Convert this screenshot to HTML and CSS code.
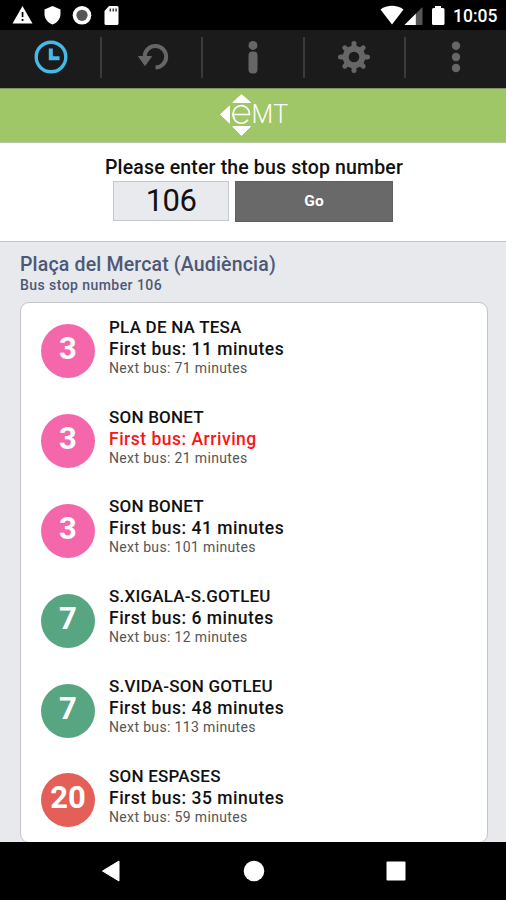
FILE: index.html
```html
<!DOCTYPE html>
<html lang="en">
<head>
<meta charset="utf-8">
<title>EMT bus times</title>
<link rel="stylesheet" href="styles.css">
</head>
<body>
<div class="status">
  <svg class="status-left" width="130" height="30" viewBox="0 0 130 30" fill="#fff">
    <path d="M22.500 6 32.500 23.500H12.500Z"/><path d="M21.700 12h1.700v5h-1.700zM21.700 19h1.700v2h-1.700z" fill="#000"/>
    <path d="M52.500 6 60.500 9.500V14c0 5-3.500 9-8 10.500C48 23 44.500 19 44.500 14V9.500Z"/>
    <circle cx="82" cy="15.300" r="9.300"/><circle cx="82" cy="15.300" r="5.600" fill="#555"/>
    <path d="M109 6h8q1.500 0 1.500 1.500v16q0 1.500-1.500 1.500h-11q-1.500 0-1.500-1.500V11Z"/><path d="M109.500 8.500h1.600v3h-1.600zM112.500 8.500h1.600v3h-1.600zM115.300 8.500h1.600v3h-1.600z" fill="#444"/>
  </svg>
  <div class="status-right">
    <svg width="72" height="30" viewBox="380 0 72 30" fill="#fff">
      <path d="M380.500 9.500C387 4.500 397 4.500 403.500 9.500L392 24.500Z"/>
      <path d="M422.500 7V25H404.500Z" fill="#555"/><path d="M415.800 13.700V25H404.500Z"/>
      <path d="M435 6h6v2h2q1.500 0 1.500 1.500v14q0 1.500-1.500 1.500h-9.500q-1.500 0-1.500-1.500v-14q0-1.500 1.500-1.500h1.500z"/>
    </svg>
    <span class="clock">10:05</span>
  </div>
</div>
<nav class="tabs">
  <div class="tab"><svg width="36" height="36" viewBox="0 0 36 36" fill="none" stroke="#45b9e8"><circle cx="18" cy="18" r="14.800" stroke-width="3.400"/><path d="M17.800 9.500V19.300H26.500" stroke-width="4"/></svg></div>
  <div class="tab"><svg width="36" height="36" viewBox="0 0 36 36" fill="none" stroke="#666"><path d="M10.600 17A10.800 10.800 0 1 1 21.500 28.600" stroke-width="4"/><path d="M4.500 17.500H17.500L11 26.500Z" fill="#666" stroke-width="1"/></svg></div>
  <div class="tab"><svg width="36" height="36" viewBox="0 0 36 36" fill="#666"><circle cx="18" cy="6.400" r="4.500"/><rect x="13.500" y="12.500" width="9" height="22" rx="4"/></svg></div>
  <div class="tab"><svg width="36" height="36" viewBox="0 0 36 36"><g stroke="#666" stroke-width="5" stroke-linecap="round"><path d="M18 4.500V31.500M4.500 18H31.500M8.800 8.800 27.200 27.200M27.200 8.800 8.800 27.200"/></g><circle cx="18" cy="18" r="8.300" fill="#1b1b1b" stroke="#666" stroke-width="6"/></svg></div>
  <div class="tab"><svg width="36" height="36" viewBox="0 0 36 36" fill="#666"><circle cx="19" cy="6.800" r="4.200"/><circle cx="19" cy="18" r="4.200"/><circle cx="19" cy="29" r="4.200"/></svg></div>
</nav>
<header class="brand">
  <svg width="70" height="44" viewBox="219 93 70 44" fill="#fff" stroke="#fff" stroke-linejoin="round">
    <path d="M241.500 94.500 250.500 102.500H232.800ZM241.500 135.500 250.500 126.500H232.800ZM220.500 114.500 229.500 106V123Z" stroke-width="1"/>
    <path d="M233.400 114.500H249.500A8.200 8.800 0 1 0 247.800 119.800" fill="none" stroke-width="1.700"/>
    <text class="logo" x="251.500" y="123.200">MT</text>
  </svg>
</header>
<section class="search">
  <div class="prompt">Please enter the bus stop number</div>
  <div class="controls"><div class="field">106</div><div class="go">Go</div></div>
</section>
<main class="results">
  <div class="stop">Plaça del Mercat (Audiència)</div>
  <div class="stop-no">Bus stop number 106</div>
  <div class="card">
    <div class="row"><div class="line pink">3</div><div><div class="dest">PLA DE NA TESA</div><div class="first">First bus: 11 minutes</div><div class="next">Next bus: 71 minutes</div></div></div>
    <div class="row"><div class="line pink">3</div><div><div class="dest">SON BONET</div><div class="first now">First bus: Arriving</div><div class="next">Next bus: 21 minutes</div></div></div>
    <div class="row"><div class="line pink">3</div><div><div class="dest">SON BONET</div><div class="first">First bus: 41 minutes</div><div class="next">Next bus: 101 minutes</div></div></div>
    <div class="row"><div class="line green">7</div><div><div class="dest">S.XIGALA-S.GOTLEU</div><div class="first">First bus: 6 minutes</div><div class="next">Next bus: 12 minutes</div></div></div>
    <div class="row"><div class="line green">7</div><div><div class="dest">S.VIDA-SON GOTLEU</div><div class="first">First bus: 48 minutes</div><div class="next">Next bus: 113 minutes</div></div></div>
    <div class="row"><div class="line red">20</div><div><div class="dest">SON ESPASES</div><div class="first">First bus: 35 minutes</div><div class="next">Next bus: 59 minutes</div></div></div>
  </div>
</main>
<footer class="navbar">
  <svg width="20" height="24" viewBox="0 0 20 24"><path d="M1.500 12 18 2V22Z" fill="#fff" stroke="#fff" stroke-linejoin="round"/></svg>
  <svg width="22" height="24" viewBox="0 0 22 24"><circle cx="11" cy="12" r="10.300" fill="#fff"/></svg>
  <svg width="20" height="24" viewBox="0 0 20 24"><rect x="0.500" y="2.500" width="19" height="19" rx="1" fill="#fff"/></svg>
</footer>
</body>
</html>
```
FILE: styles.css
```css
* { box-sizing: border-box; }
body {
  margin: 0;
  width: 506px;
  height: 900px;
  overflow: hidden;
  display: flex;
  flex-direction: column;
  background: #000;
  font-family: Roboto, "Liberation Sans", sans-serif;
  font-weight: 500;
  color: #111;
  white-space: nowrap;
}
svg { display: block; flex: none; }
.status { height: 30px; flex: none; display: flex; justify-content: space-between; }
.status-right { display: flex; width: 126px; }
.clock { color: #fff; font-size: 17.500px; line-height: 32px; margin-left: 1px; }
.tabs { height: 58px; flex: none; display: flex; background: #1b1b1b; }
.tab { flex: 1; display: flex; align-items: center; justify-content: center; position: relative; padding-bottom: 4px; }
.tab + .tab::before {
  content: "";
  position: absolute;
  left: -1px;
  top: 7px;
  width: 2px;
  height: 41px;
  background: #3b3b3b;
}
.brand {
  height: 55px;
  flex: none;
  display: flex;
  justify-content: center;
  padding: 5px 0 0 2px;
  background: #9fc767;
  border-top: 1px solid #7d9657;
  border-bottom: 1px solid #b5c7a0;
}
.brand svg { margin-top: -1px; }
.logo { font-family: Roboto, sans-serif; font-weight: 300; font-size: 25px; letter-spacing: 0.5px; stroke: none; }
.search { height: 99px; flex: none; background: #fff; border-bottom: 1px solid #c0c2c4; padding-top: 13px; }
.prompt { text-align: center; font-size: 19.500px; line-height: 24px; letter-spacing: 0.15px; padding-left: 2px; }
.controls { display: flex; gap: 6px; margin: 1px 0 0 113px; }
.field {
  width: 116px;
  height: 40px;
  background: #e8eaee;
  border: 1px solid #c5c8cb;
  font-size: 31px;
  font-weight: 400;
  line-height: 37px;
  letter-spacing: -0.6px;
  text-align: center;
}
.go {
  width: 158px;
  height: 41px;
  background: #696969;
  border: 1px solid #606060;
  color: #fff;
  font-size: 15.500px;
  font-weight: 700;
  line-height: 38px;
  text-align: center;
}
.results { height: 600px; flex: none; background: #e7e9ed; padding: 11px 18px 0 20px; overflow: hidden; }
.stop { font-size: 19.500px; line-height: 24px; color: #4d5877; letter-spacing: 0.170px; }
.stop-no { font-size: 14px; line-height: 16px; color: #4d5877; letter-spacing: 0.440px; }
.card {
  margin-top: 9px;
  height: 541px;
  background: #fff;
  border: 1px solid #c3c5c8;
  border-radius: 9px;
  padding: 3.500px 0 0 20px;
}
.row { height: 89.800px; display: flex; align-items: center; gap: 14px; }
.line {
  width: 54px;
  height: 54px;
  border-radius: 50%;
  color: #fff;
  font-size: 31px;
  font-weight: 700;
  line-height: 49px;
  text-align: center;
}
.pink { background: #f567ab; }
.green { background: #57a681; }
.red { background: #e35f58; }
.dest { font-size: 17px; line-height: 20px; margin: -10px 0 2px; letter-spacing: 0.220px; }
.first { font-size: 17.500px; line-height: 21px; letter-spacing: 0.500px; }
.now { color: #f91515; }
.next { font-size: 14px; line-height: 16px; font-weight: 400; color: #555; letter-spacing: 0.350px; }
.navbar { height: 58px; flex: none; display: flex; justify-content: space-between; align-items: center; padding: 0 100px 0 101px; background: #000; }
```
